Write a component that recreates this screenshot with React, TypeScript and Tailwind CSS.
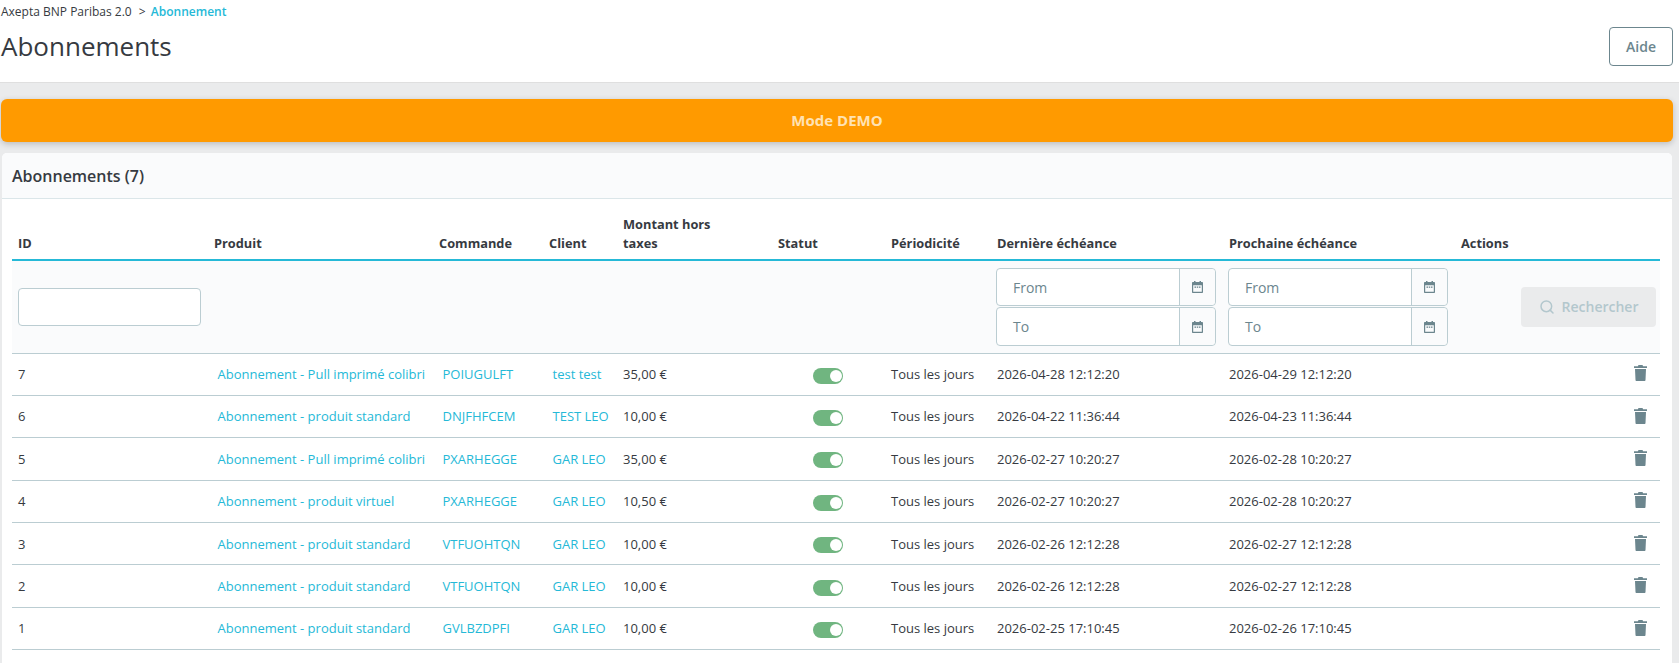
import React from "react";
import { Search } from "lucide-react";

type Row = {
  id: number;
  produit: string;
  commande: string;
  client: string;
  montant: string;
  derniere: string;
  prochaine: string;
};

const rows: Row[] = [
  { id: 7, produit: "Abonnement - Pull imprimé colibri", commande: "POIUGULFT", client: "test test", montant: "35,00 €", derniere: "2026-04-28 12:12:20", prochaine: "2026-04-29 12:12:20" },
  { id: 6, produit: "Abonnement - produit standard", commande: "DNJFHFCEM", client: "TEST LEO", montant: "10,00 €", derniere: "2026-04-22 11:36:44", prochaine: "2026-04-23 11:36:44" },
  { id: 5, produit: "Abonnement - Pull imprimé colibri", commande: "PXARHEGGE", client: "GAR LEO", montant: "35,00 €", derniere: "2026-02-27 10:20:27", prochaine: "2026-02-28 10:20:27" },
  { id: 4, produit: "Abonnement - produit virtuel", commande: "PXARHEGGE", client: "GAR LEO", montant: "10,50 €", derniere: "2026-02-27 10:20:27", prochaine: "2026-02-28 10:20:27" },
  { id: 3, produit: "Abonnement - produit standard", commande: "VTFUOHTQN", client: "GAR LEO", montant: "10,00 €", derniere: "2026-02-26 12:12:28", prochaine: "2026-02-27 12:12:28" },
  { id: 2, produit: "Abonnement - produit standard", commande: "VTFUOHTQN", client: "GAR LEO", montant: "10,00 €", derniere: "2026-02-26 12:12:28", prochaine: "2026-02-27 12:12:28" },
  { id: 1, produit: "Abonnement - produit standard", commande: "GVLBZDPFI", client: "GAR LEO", montant: "10,00 €", derniere: "2026-02-25 17:10:45", prochaine: "2026-02-26 17:10:45" },
];

const CalendarIcon = () => (
  <svg width="11" height="12" viewBox="0 0 11 12" fill="#6c868e">
    <path d="M2 0h1.500v1h4V0H9v1h1c.6 0 1 .4 1 1v9c0 .6-.4 1-1 1H1c-.6 0-1-.4-1-1V2c0-.6.4-1 1-1h1zM1.200 4.200v6.600h8.600V4.200z" fillRule="evenodd" />
    <rect x="2.500" y="5.500" width="1.500" height="1.300" />
    <rect x="4.750" y="5.500" width="1.500" height="1.300" />
    <rect x="7" y="5.500" width="1.500" height="1.300" />
  </svg>
);

const DateField = ({ label }: { label: string }) => (
  <div className="flex h-[38.500px] w-[220px] rounded-[4px] border border-[#bbcdd2] bg-white">
    <div className="flex flex-1 items-center pl-[16px] text-[14px] text-[#6c868e]">{label}</div>
    <div className="flex w-[36px] items-center justify-center rounded-r-[4px] border-l border-[#bbcdd2] bg-[#fafbfc]">
      <CalendarIcon />
    </div>
  </div>
);

const Toggle = () => (
  <div className="ml-[35px] flex h-[16px] w-[30px] items-center justify-end rounded-full bg-[#70b580] pr-[1px]">
    <div className="h-[12px] w-[12px] rounded-full bg-white" />
  </div>
);

const TrashIcon = () => (
  <svg width="13" height="16" viewBox="0 0 13 16" className="-mt-[2px] ml-auto mr-[13px]" fill="#6c868e">
    <path d="M4.500 0h4l.6 1.200H13v1.800H0V1.200h3.900z" />
    <path d="M1 4h11l-.5 11c0 .6-.5 1-1 1h-8c-.5 0-1-.4-1-1z" />
  </svg>
);

const thClass = "pb-[6px] pl-[6px] text-left align-bottom text-[12.800px] font-bold leading-[19px] text-[#363a41]";
const tdClass = "pl-[6px] pt-[1px] text-[13px] text-[#363a41]";
const linkClass = "pl-[9.500px] pt-[1px] text-[13px] text-[#25b9d7]";

export default function App() {
  return (
    <div className="min-h-[663px] bg-[#eaebec] font-['Open_Sans','Noto_Sans',sans-serif] text-[#363a41]">
      <div className="relative h-[83px] border-b border-[#dfdfdf] bg-white pl-[1px]">
        <div className="pt-[3px] text-[12px] leading-[18px]">
          Axepta BNP Paribas 2.0 <span className="ml-[4px] mr-[2px]">&gt;</span>{" "}
          <span className="font-semibold text-[#25b9d7]">Abonnement</span>
        </div>
        <h1 className="mt-[7px] text-[26px] leading-[36px]">Abonnements</h1>
        <button className="absolute right-[6px] top-[27px] h-[39px] w-[64px] rounded-[4px] border border-[#6c868e] text-[14px] font-semibold text-[#6c868e]">
          Aide
        </button>
      </div>

      <div className="pl-[1px] pr-[6px] pt-[16px]">
        <div className="flex h-[43px] items-center justify-center rounded-[6px] bg-[#ff9a00] text-[15px] font-bold text-[#ffe2b3] shadow-[0_2px_6px_rgba(0,0,0,0.2)]">
          Mode DEMO
        </div>

        <div className="mx-[1px] mt-[11px] rounded-t-[5px] bg-white pb-[14px]">
          <div className="flex h-[46px] items-center rounded-t-[5px] border-b border-[#dbe6e9] bg-[#fafbfc] pl-[10px] text-[16px] font-semibold">
            Abonnements (7)
          </div>

          <div className="pl-[10px] pr-[12px]">
            <table className="w-[1648px] table-fixed border-collapse">
              <colgroup>
                <col className="w-[196px]" />
                <col className="w-[225px]" />
                <col className="w-[110px]" />
                <col className="w-[74px]" />
                <col className="w-[155px]" />
                <col className="w-[113px]" />
                <col className="w-[106px]" />
                <col className="w-[232px]" />
                <col className="w-[232px]" />
                <col className="w-[205px]" />
              </colgroup>
              <thead>
                <tr className="h-[61px] border-b-2 border-[#25b9d7]">
                  <th className={thClass}>ID</th>
                  <th className={thClass}>Produit</th>
                  <th className={thClass}>Commande</th>
                  <th className={thClass}>Client</th>
                  <th className={thClass}>
                    Montant hors
                    <br />
                    taxes
                  </th>
                  <th className={thClass}>Statut</th>
                  <th className={thClass}>Périodicité</th>
                  <th className={thClass}>Dernière échéance</th>
                  <th className={thClass}>Prochaine échéance</th>
                  <th className={thClass}>Actions</th>
                </tr>
                <tr className="h-[93px] border-b border-[#bbcdd2] bg-[#fafbfc]">
                  <th className="pl-[6px] pt-[1px] text-left font-normal">
                    <input className="h-[38px] w-[183px] rounded-[4px] border border-[#bbcdd2] bg-white" />
                  </th>
                  <th colSpan={6} />
                  <th className="pl-[5px] font-normal">
                    <DateField label="From" />
                    <div className="mt-[1px]">
                      <DateField label="To" />
                    </div>
                  </th>
                  <th className="pl-[5px] font-normal">
                    <DateField label="From" />
                    <div className="mt-[1px]">
                      <DateField label="To" />
                    </div>
                  </th>
                  <th className="font-normal">
                    <button className="ml-[66px] flex h-[40px] w-[135px] items-center justify-center gap-[7px] rounded-[4px] bg-[#eaebec] text-[14px] font-semibold text-[#b3c7cd]">
                      <Search size={16} strokeWidth={2.25} />
                      Rechercher
                    </button>
                  </th>
                </tr>
              </thead>
              <tbody>
                {rows.map(row => (
                  <tr key={row.id} className="h-[42.400px] border-b border-[#bbcdd2]">
                    <td className={tdClass}>{row.id}</td>
                    <td className={linkClass}>{row.produit}</td>
                    <td className={linkClass}>{row.commande}</td>
                    <td className={linkClass}>{row.client}</td>
                    <td className={tdClass}>{row.montant}</td>
                    <td className="pl-[6px] pt-[3px]">
                      <Toggle />
                    </td>
                    <td className={tdClass}>Tous les jours</td>
                    <td className={tdClass}>{row.derniere}</td>
                    <td className={tdClass}>{row.prochaine}</td>
                    <td>
                      <TrashIcon />
                    </td>
                  </tr>
                ))}
              </tbody>
            </table>
          </div>
        </div>
      </div>
    </div>
  );
}
